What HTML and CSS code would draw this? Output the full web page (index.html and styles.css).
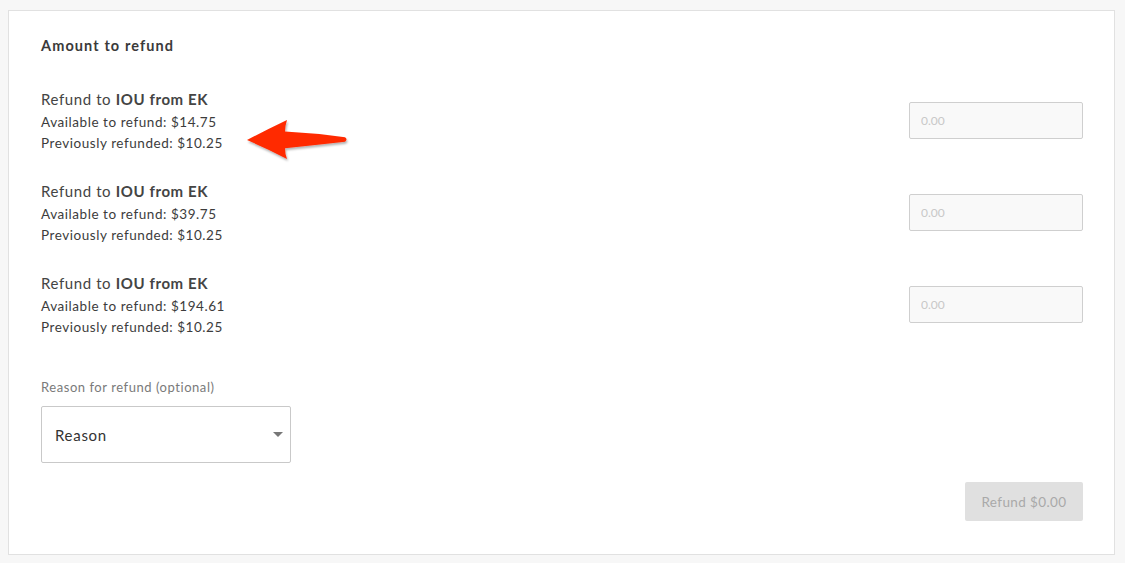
FILE: index.html
```html
<!DOCTYPE html>
<html lang="en">
<head>
  <meta charset="UTF-8" />
  <meta name="viewport" content="width=device-width, initial-scale=1.0" />
  <title>Refund</title>
  <link rel="stylesheet" href="styles.css">
</head>
<body>
  <div class="card">
    <h3 class="card-title">Amount to refund</h3>

    <div class="refund-row">
      <div class="refund-info">
        <div class="refund-name">Refund to <b>IOU from EK</b></div>
        <div class="refund-line">Available to refund: $14.75</div>
        <div class="refund-line">Previously refunded: $10.25</div>
      </div>
      <input class="amount" type="text" placeholder="0.00" />
      <svg class="arrow" width="112" height="50" viewBox="0 0 112 50">
        <defs>
          <filter id="sh" x="-10%" y="-20%" width="130%" height="150%">
            <feDropShadow dx="1" dy="2" stdDeviation="1.2" flood-color="#000" flood-opacity="0.3" />
          </filter>
        </defs>
        <path filter="url(#sh)" fill="#ff2a00"
          d="M7 26 Q28 15 47 6 Q45 12 45 17.5 Q75 19 105 23.3 Q108 25.5 105 27.7 Q75 31 45 34.3 Q45 40 47 45 Q28 35 7 26 Z" />
      </svg>
    </div>

    <div class="refund-row">
      <div class="refund-info">
        <div class="refund-name">Refund to <b>IOU from EK</b></div>
        <div class="refund-line">Available to refund: $39.75</div>
        <div class="refund-line">Previously refunded: $10.25</div>
      </div>
      <input class="amount" type="text" placeholder="0.00" />
    </div>

    <div class="refund-row">
      <div class="refund-info">
        <div class="refund-name">Refund to <b>IOU from EK</b></div>
        <div class="refund-line">Available to refund: $194.61</div>
        <div class="refund-line">Previously refunded: $10.25</div>
      </div>
      <input class="amount" type="text" placeholder="0.00" />
    </div>

    <label class="reason-label">Reason for refund (optional)</label>
    <div class="reason-select">
      <span>Reason</span>
      <span class="caret"></span>
    </div>

    <div class="actions">
      <button class="refund-btn" disabled>Refund $0.00</button>
    </div>
  </div>
</body>
</html>
```

FILE: styles.css
```css
body {
  margin: 0;
  padding: 10px 10px 8px 8px;
  background: #f7f7f7;
  font-family: Lato, 'Open Sans', sans-serif;
  color: #404040;
}
.card {
  background: #fff;
  border: 1px solid #e1e1e1;
  padding: 25px 31px 33px 32px;
}
.card-title {
  margin: 0 0 33px;
  font-size: 14.5px;
  font-weight: 700;
  line-height: 20px;
  color: #3a3a3a;
  letter-spacing: 1.1px;
}
.refund-row {
  position: relative;
  display: flex;
  justify-content: space-between;
  align-items: flex-start;
  height: 92px;
}
.refund-name {
  margin-bottom: 3px;
  font-size: 15px;
  line-height: 20px;
  letter-spacing: 0.6px;
  color: #444;
}
.refund-name b {
  font-weight: 700;
}
.refund-line {
  font-size: 13.5px;
  line-height: 21px;
  letter-spacing: 0.55px;
  color: #3c3c3c;
}
.amount {
  margin-top: 13px;
  box-sizing: border-box;
  width: 174px;
  height: 37px;
  border: 1px solid #cfcfcf;
  border-radius: 2px;
  background: #f9f9f9;
  padding: 0 11px;
  font-family: Lato, sans-serif;
  font-size: 12px;
  color: #333;
}
.amount::placeholder {
  color: #c8c8c8;
}
.arrow {
  position: absolute;
  left: 199px;
  top: 25px;
}
.reason-label {
  display: block;
  margin-top: 13px;
  font-size: 13px;
  line-height: 18px;
  color: #7a7a7a;
  letter-spacing: 0.55px;
}
.reason-select {
  margin-top: 10px;
  box-sizing: border-box;
  width: 250px;
  height: 57px;
  border: 1px solid #c9c9c9;
  border-radius: 2px;
  display: flex;
  align-items: center;
  justify-content: space-between;
  padding: 0 7px 0 13px;
  font-size: 15px;
  letter-spacing: 0.7px;
  color: #333;
}
.caret {
  width: 0;
  height: 0;
  border-left: 5px solid transparent;
  border-right: 5px solid transparent;
  border-top: 5px solid #777;
}
.actions {
  display: flex;
  justify-content: flex-end;
  margin-top: 19px;
}
.refund-btn {
  width: 118px;
  height: 39px;
  border: none;
  border-radius: 2px;
  background: #e0e0e0;
  color: #a9a9a9;
  font-family: Lato, sans-serif;
  font-size: 13.5px;
  letter-spacing: 0.4px;
}
```
